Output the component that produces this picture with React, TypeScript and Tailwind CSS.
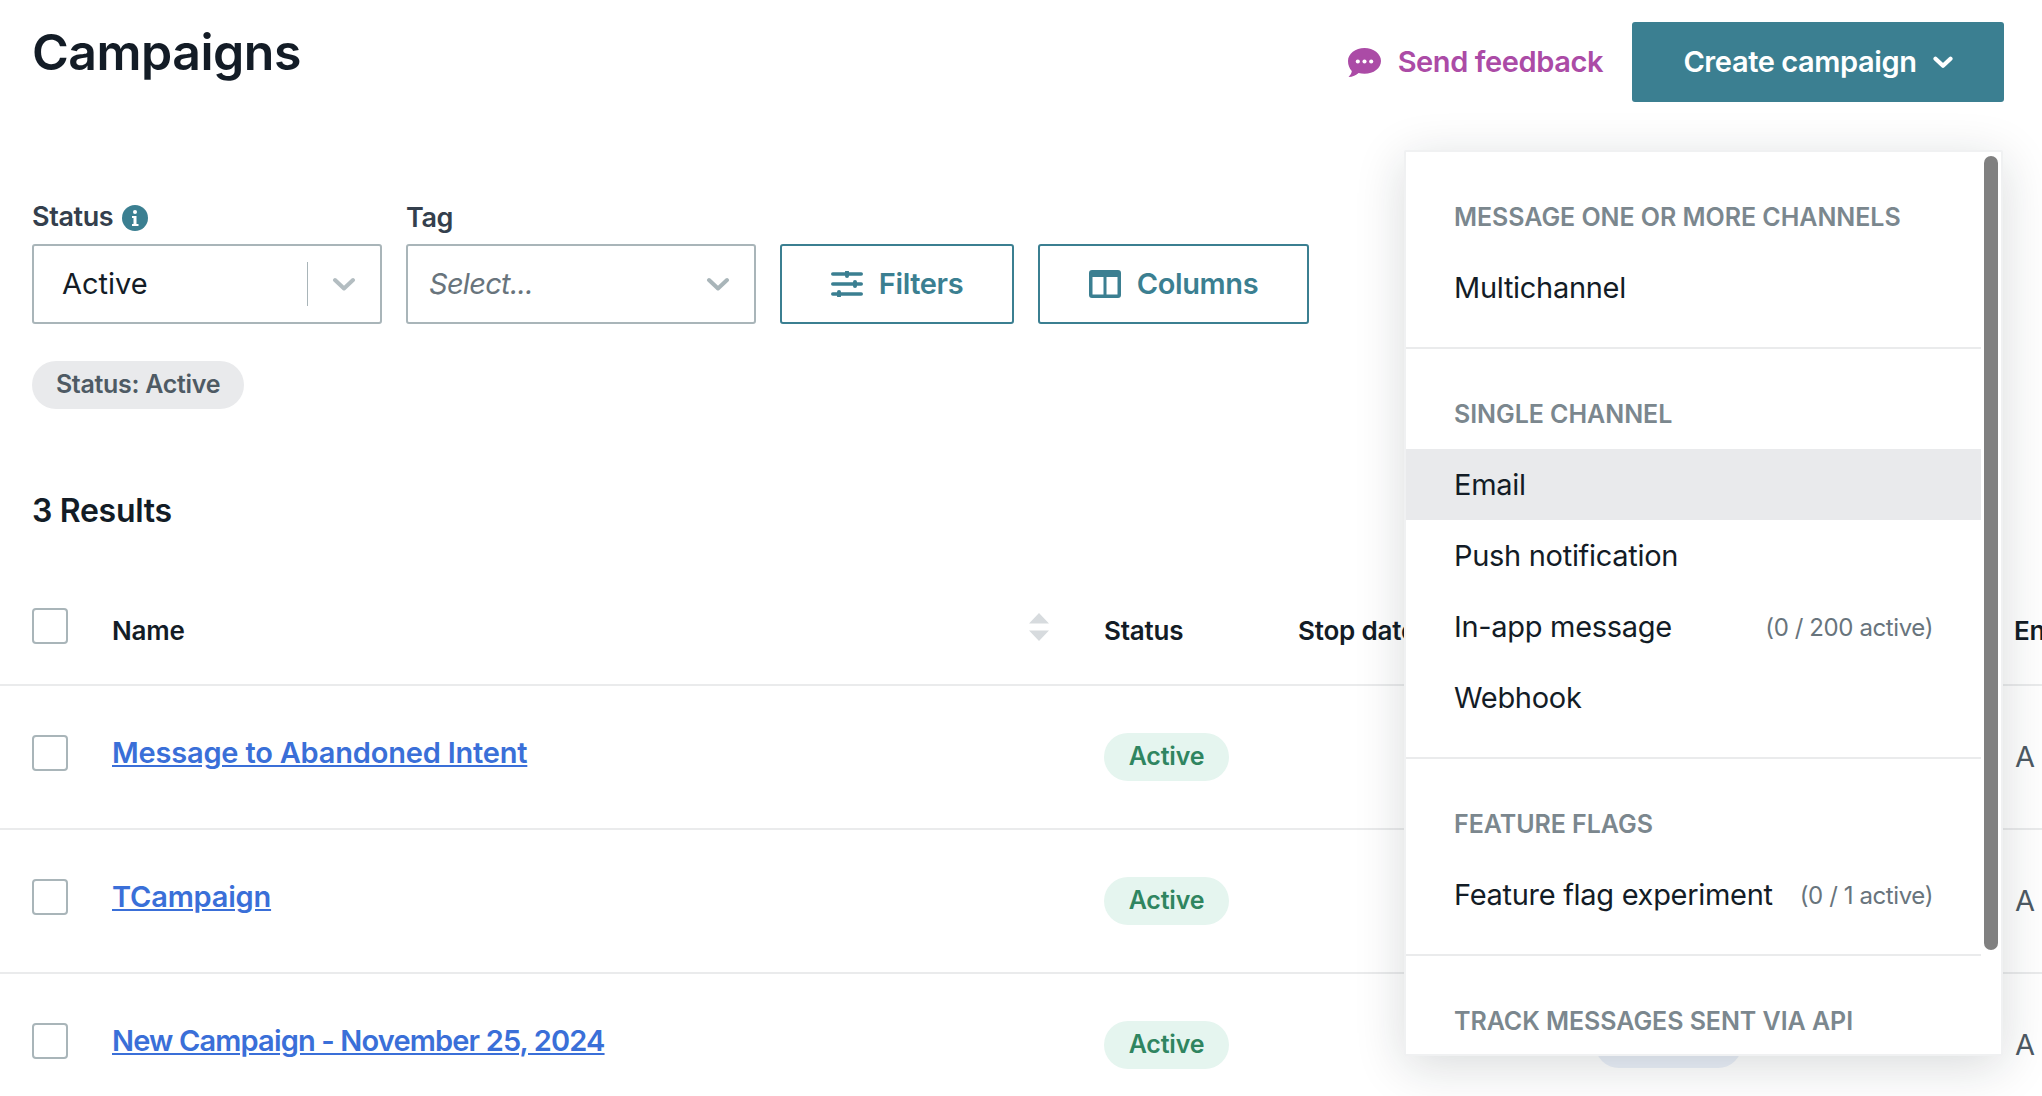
import { ReactNode } from 'react';

const campaigns = [
  { name: 'Message to Abandoned Intent', tracking: 'tracking-[-0.2px]' },
  { name: 'TCampaign', tracking: 'tracking-[-0.2px]' },
  { name: 'New Campaign - November 25, 2024', tracking: 'tracking-[-0.85px]' },
];

function Chevron({ className, weight = 4 }: { className: string; weight?: number }) {
  return (
    <svg viewBox="0 0 24 14" className={className} fill="none" stroke="currentColor" strokeWidth={weight} strokeLinecap="round" strokeLinejoin="round">
      <path d="M3 3l9 8.500L21 3" />
    </svg>
  );
}

function SectionTitle({ children }: { children: ReactNode }) {
  return <div className="h-[71px] pt-[2px] flex items-center px-[48px] text-[25px] font-semibold uppercase text-[#7b878e] tracking-[-0.05px]">{children}</div>;
}

function MenuItem({ label, note, active }: { label: string; note?: string; active?: boolean }) {
  return (
    <div className={`h-[71px] flex items-center justify-between px-[48px] text-[29px] text-[#131c26] tracking-[-0.3px] ${active ? 'bg-[#e9eaec]' : ''}`}>
      <span>{label}</span>
      {note && <span className="pt-[2px] text-[24px] text-[#68747c] tracking-[-0.4px]">{note}</span>}
    </div>
  );
}

function Checkbox() {
  return <div className="w-9 h-9 rounded-[4px] border-2 border-[#a9b5b9] bg-white" />;
}

export default function App() {
  return (
    <div className="relative w-[2042px] h-[1096px] overflow-hidden bg-white font-['Inter',sans-serif] text-[#131c26]">
      {/* Header */}
      <header className="flex justify-between items-start pt-[22px] pl-8 pr-[38px]">
        <h1 className="text-[50px] leading-[60px] font-semibold tracking-[-0.5px]">Campaigns</h1>
        <div className="flex items-center gap-[29px]">
          <button className="flex items-center gap-[17px] text-[29px] font-semibold text-[#ab4ba6] tracking-[-0.4px]">
            <svg viewBox="0 0 32 28" className="w-[33px] h-[29px]" fill="currentColor">
              <path d="M16 0c8.800 0 16 5.600 16 12.600S24.800 25 16 25c-2 0-3.900-.3-5.700-.8C8 26.400 4.500 28 .5 28c1.800-1.600 2.900-3.500 3.200-5.700C1.400 20 0 16.500 0 12.600 0 5.600 7.200 0 16 0z" />
              <circle cx="9.500" cy="13" r="2" fill="#fff" />
              <circle cx="16" cy="13" r="2" fill="#fff" />
              <circle cx="22.500" cy="13" r="2" fill="#fff" />
            </svg>
            Send feedback
          </button>
          <button className="w-[372px] h-20 rounded-[3px] bg-[#3b7f91] text-white flex items-center justify-center gap-4 text-[29px] font-semibold tracking-[-0.4px]">
            Create campaign
            <Chevron className="w-5 h-3" weight={5} />
          </button>
        </div>
      </header>

      {/* Filters */}
      <section className="mt-[102px] px-8">
        <div className="flex items-end gap-6">
          <div className="w-[350px]">
            <div className="flex items-center gap-[9px] h-[27px] mb-[13px] text-[27px] font-semibold text-[#343f4d] tracking-[-0.4px]">
              Status
              <svg viewBox="0 0 26 26" className="w-[26px] h-[26px]">
                <circle cx="13" cy="13" r="13" fill="#3b7f91" />
                <circle cx="13" cy="7" r="2" fill="#fff" />
                <path d="M10 11h4.500v8H16.500v2h-6.500v-2h1.500v-6H10z" fill="#fff" />
              </svg>
            </div>
            <div className="h-20 rounded-[3px] border-2 border-[#a9b5b9] flex items-center pl-[28px] text-[29px]">
              <span className="flex-1">Active</span>
              <div className="w-px h-11 bg-[#a9b5b9]" />
              <div className="w-[72px] flex justify-center text-[#b3bdc1]"><Chevron className="w-6 h-[14px]" /></div>
            </div>
          </div>
          <div className="w-[350px]">
            <div className="h-[27px] mb-[13px] text-[27px] leading-[27px] font-semibold text-[#343f4d] tracking-[-0.4px]">Tag</div>
            <div className="h-20 rounded-[3px] border-2 border-[#a9b5b9] flex items-center pl-[21px] pr-[24px] text-[29px]">
              <span className="flex-1 italic text-[#68747c] tracking-[-0.7px]">Select...</span>
              <div className="text-[#a9b5b9]"><Chevron className="w-6 h-[14px]" /></div>
            </div>
          </div>
          <button className="w-[234px] h-20 rounded-[3px] border-2 border-[#3b7f91] text-[#3b7f91] flex items-center justify-center gap-4 text-[29px] font-semibold tracking-[-0.4px]">
            <svg viewBox="0 0 32 26" className="w-8 h-[26px]" fill="currentColor">
              <rect y="1.250" width="32" height="3.500" rx="1.750" />
              <rect y="11.250" width="32" height="3.500" rx="1.750" />
              <rect y="21.250" width="32" height="3.500" rx="1.750" />
              <rect x="14" y="-1" width="4" height="8" rx="2" />
              <rect x="22" y="9" width="4" height="8" rx="2" />
              <rect x="6" y="19" width="4" height="8" rx="2" />
            </svg>
            Filters
          </button>
          <button className="w-[271px] h-20 rounded-[3px] border-2 border-[#3b7f91] text-[#3b7f91] flex items-center justify-center gap-4 text-[29px] font-semibold tracking-[-0.4px]">
            <svg viewBox="0 0 32 28" className="w-8 h-7" fill="currentColor">
              <path fillRule="evenodd" d="M3 0h26a3 3 0 0 1 3 3v22a3 3 0 0 1-3 3H3a3 3 0 0 1-3-3V3a3 3 0 0 1 3-3zM3.500 7v17.500H14.500V7zM17.500 7v17.500H28.500V7z" />
            </svg>
            Columns
          </button>
        </div>
        <div className="mt-[37px] inline-flex items-center h-12 w-[212px] justify-center rounded-full bg-[#e9eaec] text-[25px] font-semibold text-[#4e5a64] tracking-[-0.3px]">Status: Active</div>
        <h2 className="mt-[84px] text-[32px] leading-9 font-semibold tracking-[-0.3px]">3 Results</h2>
      </section>

      {/* Table */}
      <div className="mt-[61px]">
        <div className="grid grid-cols-[80px_917px_75px_194px_716px_1fr] items-center h-[96px] border-b-2 border-[#eaebec] pl-8 pb-[14px] text-[26px] font-semibold tracking-[-0.2px]">
          <div className="-mt-[9px]"><Checkbox /></div>
          <div>Name</div>
          <svg viewBox="0 0 20 28" className="w-5 h-7 text-[#d7dbde] -mt-[6px]" fill="currentColor">
            <path d="M10 0l10 10.500H0zM10 28L0 17.500h20z" />
          </svg>
          <div>Status</div>
          <div className="whitespace-nowrap">Stop date</div>
          <div className="whitespace-nowrap">End</div>
        </div>
        {campaigns.map((c) => (
          <div key={c.name} className="grid grid-cols-[80px_992px_195px_716px_1fr] items-center h-[144px] border-b-2 border-[#eaebec] pl-8">
            <div className="-mt-[8px]"><Checkbox /></div>
            <a className={`-mt-[8px] text-[29px] font-semibold text-[#3a6fd8] underline justify-self-start ${c.tracking}`}>{c.name}</a>
            <div className="flex h-12 w-[125px] items-center justify-center rounded-full bg-[#e5f5ef] text-[25px] font-semibold text-[#2f8560] tracking-[-0.2px]">Active</div>
            <div />
            <div className="text-[29px] text-[#4e5a64] whitespace-nowrap">A</div>
          </div>
        ))}
      </div>

      {/* pill that sits behind the open menu */}
      <div className="absolute left-[1595px] top-[1020px] w-[147px] h-12 rounded-full bg-[#ebf0f9]" />

      {/* Create campaign menu */}
      <div className="absolute left-[1404px] top-[150px] w-[599px] h-[906px] overflow-hidden rounded-[2px] border-2 border-[#f0f1f2] bg-white shadow-[0_10px_50px_rgba(20,30,40,0.16)]">
        <div className="w-[575px] pt-[29px]">
          <SectionTitle>Message one or more channels</SectionTitle>
          <MenuItem label="Multichannel" />
          <div className="mt-[24px] h-[2px] bg-[#eaebec]" />
          <div className="mt-[29px]"><SectionTitle>Single channel</SectionTitle></div>
          <MenuItem label="Email" active />
          <MenuItem label="Push notification" />
          <MenuItem label="In-app message" note="(0 / 200 active)" />
          <MenuItem label="Webhook" />
          <div className="mt-[24px] h-[2px] bg-[#eaebec]" />
          <div className="mt-[29px]"><SectionTitle>Feature flags</SectionTitle></div>
          <MenuItem label="Feature flag experiment" note="(0 / 1 active)" />
          <div className="mt-[24px] h-[2px] bg-[#eaebec]" />
          <div className="mt-[29px]"><SectionTitle>Track messages sent via API</SectionTitle></div>
        </div>
        <div className="absolute right-[3px] top-[4px] w-[14px] h-[794px] rounded-full bg-[#808080]" />
      </div>
    </div>
  );
}
